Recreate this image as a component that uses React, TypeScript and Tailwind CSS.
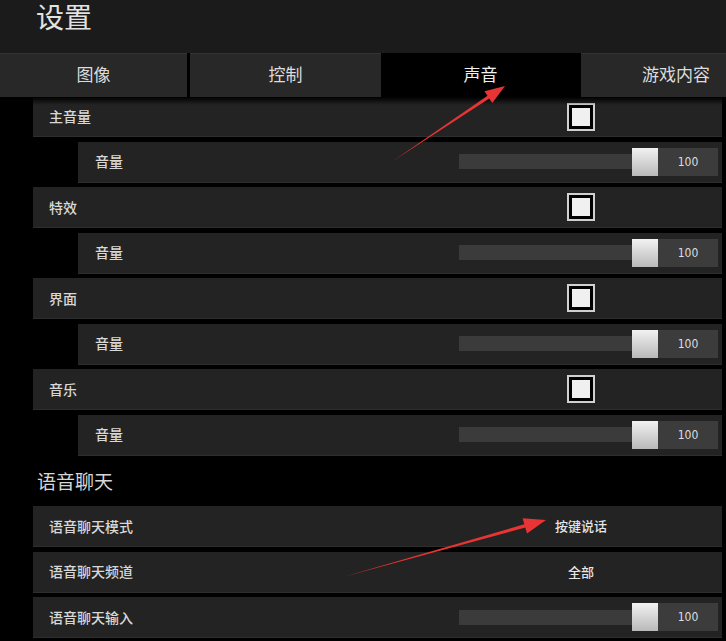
import React from "react";

const FONT = { fontFamily: '"Noto Sans CJK SC", "Noto Sans", sans-serif' };

function Checkbox() {
  return (
    <div className="w-[28px] h-[28px] border-2 border-[#d0d0d0] bg-black p-[3px] shrink-0">
      <div className="w-full h-full bg-[#f0f0f0]" />
    </div>
  );
}

function Slider() {
  return (
    <div className="ml-auto mr-[4px] flex items-center">
      <div className="relative w-[199px] h-[28px] flex items-center">
        <div className="w-[190px] h-[15px] bg-[#3b3b3b]" />
        <div className="absolute right-0 top-0 w-[26px] h-[28px] bg-gradient-to-b from-[#f2f2f2] to-[#b9b9b9]" />
      </div>
      <div className="w-[60px] h-[28px] bg-[#3c3c3c] flex items-center justify-center text-[12px] text-[#dedede]" style={{ fontFamily: '"Liberation Sans Narrow", "DejaVu Sans Condensed", "Liberation Sans", sans-serif' }}>
        100
      </div>
    </div>
  );
}

function MainRow({ label, h = "h-[41px]" }: { label: string; h?: string }) {
  return (
    <div className={`${h} ml-[33px] mr-[4px] bg-[#232323] border-b border-[#2e2e2e] flex items-center`}>
      <div className="w-[534px] pl-[16px] text-[14px] font-medium text-[#d8d8d8]">{label}</div>
      <Checkbox />
    </div>
  );
}

function SubRow() {
  return (
    <div className="h-[41px] ml-[78px] mr-[4px] bg-[#232323] border-b border-[#2e2e2e] flex items-center">
      <div className="pl-[17px] text-[14px] font-medium text-[#d8d8d8]">音量</div>
      <Slider />
    </div>
  );
}

function ValueRow({ label, value }: { label: string; value: string }) {
  return (
    <div className="h-[41px] ml-[33px] mr-[4px] bg-[#232323] border-b border-[#2e2e2e] flex items-center">
      <div className="w-[534px] pl-[16px] text-[14px] font-medium text-[#d8d8d8]">{label}</div>
      <div className="w-[28px] flex justify-center">
        <span className="whitespace-nowrap text-[13px] font-medium text-[#e6e6e6]">{value}</span>
      </div>
    </div>
  );
}

export default function App() {
  return (
    <div className="relative w-[726px] h-[641px] bg-black overflow-hidden" style={FONT}>
      <div className="h-[53px] bg-[#1b1b1b] pl-[36px] pt-[1px] text-[28px] leading-[30px] text-[#e2e2e2]">设置</div>
      <div className="flex h-[44px] text-[17px]">
        <div className="w-[187px] shrink-0 bg-[#282828] border-t border-[#333] flex items-center justify-center pb-[3px] text-[#dcdcdc]">图像</div>
        <div className="w-[191px] ml-[3px] shrink-0 bg-[#282828] border-t border-[#333] flex items-center justify-center pb-[3px] text-[#dcdcdc]">控制</div>
        <div className="w-[195px] ml-[2px] shrink-0 bg-black flex items-center justify-center pb-[3px] text-[#f0f0f0]">声音</div>
        <div className="w-[190px] ml-[3px] shrink-0 bg-[#282828] border-t border-[#333] flex items-center justify-center pb-[3px] text-[#dcdcdc]">游戏内容</div>
      </div>
      <div className="relative">
        <div className="flex flex-col gap-[4.5px]">
          <MainRow label="主音量" h="h-[40px]" />
          <SubRow />
          <MainRow label="特效" />
          <SubRow />
          <MainRow label="界面" />
          <SubRow />
          <MainRow label="音乐" />
          <SubRow />
        </div>
        <div className="h-[50.5px] flex items-center pl-[37px] text-[19px] text-[#d6d6d6]">语音聊天</div>
        <div className="flex flex-col gap-[4.5px]">
          <ValueRow label="语音聊天模式" value="按键说话" />
          <ValueRow label="语音聊天频道" value="全部" />
          <div className="h-[41px] ml-[33px] mr-[4px] bg-[#232323] border-b border-[#2e2e2e] flex items-center">
            <div className="pl-[16px] text-[14px] font-medium text-[#d8d8d8]">语音聊天输入</div>
            <Slider />
          </div>
        </div>
        <div className="absolute left-0 top-0 w-full h-[8px] bg-gradient-to-b from-black to-transparent" />
      </div>
      <svg className="absolute left-0 top-0 pointer-events-none" width="726" height="641" viewBox="0 0 726 641">
        <polygon
          fill="#e83434"
          points="393,161 489.3,98.4 492.3,102.9 505,86 484.5,91.3 487.5,95.8"
        />
        <polygon
          fill="#e83434"
          points="343,577 525.3,527.5 527,533.6 546,520 522.6,518.2 524.3,524.3"
        />
      </svg>
    </div>
  );
}
